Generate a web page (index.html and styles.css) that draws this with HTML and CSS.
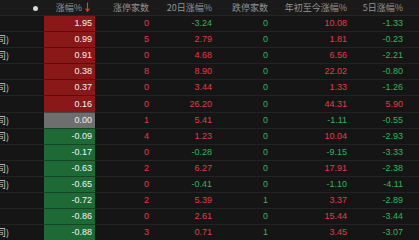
FILE: index.html
```html
<!DOCTYPE html>
<html lang="zh">
<head>
<meta charset="utf-8">
<link rel="stylesheet" href="styles.css">
</head>
<body>
<table class="grid">
  <colgroup>
    <col class="c-name"><col class="c-chg"><col class="c-up"><col class="c-20"><col class="c-down"><col class="c-ytd"><col class="c-5"><col class="c-rest">
  </colgroup>
  <thead>
    <tr>
      <th class="name"><span class="dot"></span></th>
      <th>涨幅%<svg class="arrow" width="5" height="10" viewBox="0 0 5 10"><path d="M2.5 0.5V9M0.6 6.6L2.5 9.2L4.4 6.6" fill="none" stroke="#e0452c" stroke-width="1.1"/></svg></th>
      <th>涨停家数</th>
      <th>20日涨幅%</th>
      <th>跌停家数</th>
      <th>年初至今涨幅%</th>
      <th>5日涨幅%</th>
      <th></th>
    </tr>
  </thead>
  <tbody>
    <tr><td class="name"></td><td class="chg up">1.95</td><td class="r">0</td><td class="g">-3.24</td><td class="g">0</td><td class="r">10.08</td><td class="g">-1.33</td><td></td></tr>
    <tr><td class="name"><span>司)</span></td><td class="chg up">0.99</td><td class="r">5</td><td class="r">2.79</td><td class="g">0</td><td class="r">1.81</td><td class="g">-0.23</td><td></td></tr>
    <tr><td class="name"><span>司)</span></td><td class="chg up">0.91</td><td class="r">0</td><td class="r">4.68</td><td class="g">0</td><td class="r">6.56</td><td class="g">-2.21</td><td></td></tr>
    <tr><td class="name"></td><td class="chg up">0.38</td><td class="r">8</td><td class="r">8.90</td><td class="g">0</td><td class="r">22.02</td><td class="g">-0.80</td><td></td></tr>
    <tr><td class="name"><span>司)</span></td><td class="chg up">0.37</td><td class="r">0</td><td class="r">3.44</td><td class="g">0</td><td class="r">1.33</td><td class="g">-1.26</td><td></td></tr>
    <tr><td class="name"></td><td class="chg up">0.16</td><td class="r">0</td><td class="r">26.20</td><td class="g">0</td><td class="r">44.31</td><td class="r">5.90</td><td></td></tr>
    <tr><td class="name"><span>司)</span></td><td class="chg flat">0.00</td><td class="r">1</td><td class="r">5.41</td><td class="g">0</td><td class="g">-1.11</td><td class="g">-0.55</td><td></td></tr>
    <tr><td class="name"><span>司)</span></td><td class="chg down">-0.09</td><td class="r">4</td><td class="r">1.23</td><td class="g">0</td><td class="r">10.04</td><td class="g">-2.93</td><td></td></tr>
    <tr><td class="name"></td><td class="chg down">-0.17</td><td class="r">0</td><td class="g">-0.28</td><td class="g">0</td><td class="g">-9.15</td><td class="g">-3.33</td><td></td></tr>
    <tr><td class="name"><span>司)</span></td><td class="chg down">-0.63</td><td class="r">2</td><td class="r">6.27</td><td class="g">0</td><td class="r">17.91</td><td class="g">-2.38</td><td></td></tr>
    <tr><td class="name"><span>司)</span></td><td class="chg down">-0.65</td><td class="r">0</td><td class="g">-0.41</td><td class="g">0</td><td class="g">-1.10</td><td class="g">-4.11</td><td></td></tr>
    <tr><td class="name"></td><td class="chg down">-0.72</td><td class="r">2</td><td class="r">5.39</td><td class="g">1</td><td class="r">3.37</td><td class="g">-2.89</td><td></td></tr>
    <tr><td class="name"></td><td class="chg down">-0.86</td><td class="r">0</td><td class="r">2.61</td><td class="g">0</td><td class="r">15.44</td><td class="g">-3.44</td><td></td></tr>
    <tr><td class="name"><span>司)</span></td><td class="chg down">-0.88</td><td class="r">3</td><td class="r">0.71</td><td class="g">1</td><td class="r">3.45</td><td class="g">-3.07</td><td></td></tr>
  </tbody>
</table>
</body>
</html>
```
FILE: styles.css
```css
html, body {
  margin: 0;
  padding: 0;
  background: #151515;
  overflow: hidden;
}
body {
  width: 419px;
  height: 240px;
  font-family: "Liberation Sans", "Noto Sans CJK SC", sans-serif;
  font-size: 9px;
}
.grid {
  border-collapse: collapse;
  table-layout: fixed;
  width: 419px;
}
.c-name { width: 44px; }
.c-chg { width: 51px; }
.c-up { width: 56px; }
.c-20 { width: 63px; }
.c-down { width: 56px; }
.c-ytd { width: 79px; }
.c-5 { width: 56px; }
.c-rest { width: 14px; }

th {
  height: 15px;
  padding: 0 2px 0 0;
  font-weight: normal;
  font-family: "Noto Sans CJK SC", sans-serif;
  color: #929292;
  text-align: right;
  white-space: nowrap;
  background: #1a1a1a;
  border-bottom: 1px solid #262626;
  line-height: 15px;
}
th.name { text-align: right; padding-right: 6px; }
.dot {
  display: inline-block;
  width: 5px;
  height: 5px;
  border-radius: 50%;
  background: #d8d8d8;
  vertical-align: middle;
}
.arrow {
  margin-left: 3px;
  vertical-align: -1px;
}
th:nth-child(2) { padding-right: 5px; }

td {
  height: 15.1px;
  padding: 0 2px 0 0;
  text-align: right;
  white-space: nowrap;
  border-bottom: 1px solid #232323;
  line-height: 15px;
}
td.name {
  text-align: left;
  overflow: hidden;
  color: #cfcfcf;
  font-family: "Noto Sans CJK SC", sans-serif;
}
td.name span {
  display: inline-block;
  margin-left: -3px;
}
td.chg {
  color: #f2f2f2;
  padding-right: 3px;
  border-bottom-color: rgba(0, 0, 0, 0.35);
}
td.chg.up { background: #8a1818; }
td.chg.flat { background: #6e6e6e; }
td.chg.down { background: #1e6a37; }
.r { color: #e23c46; }
.g { color: #34b45a; }
```
